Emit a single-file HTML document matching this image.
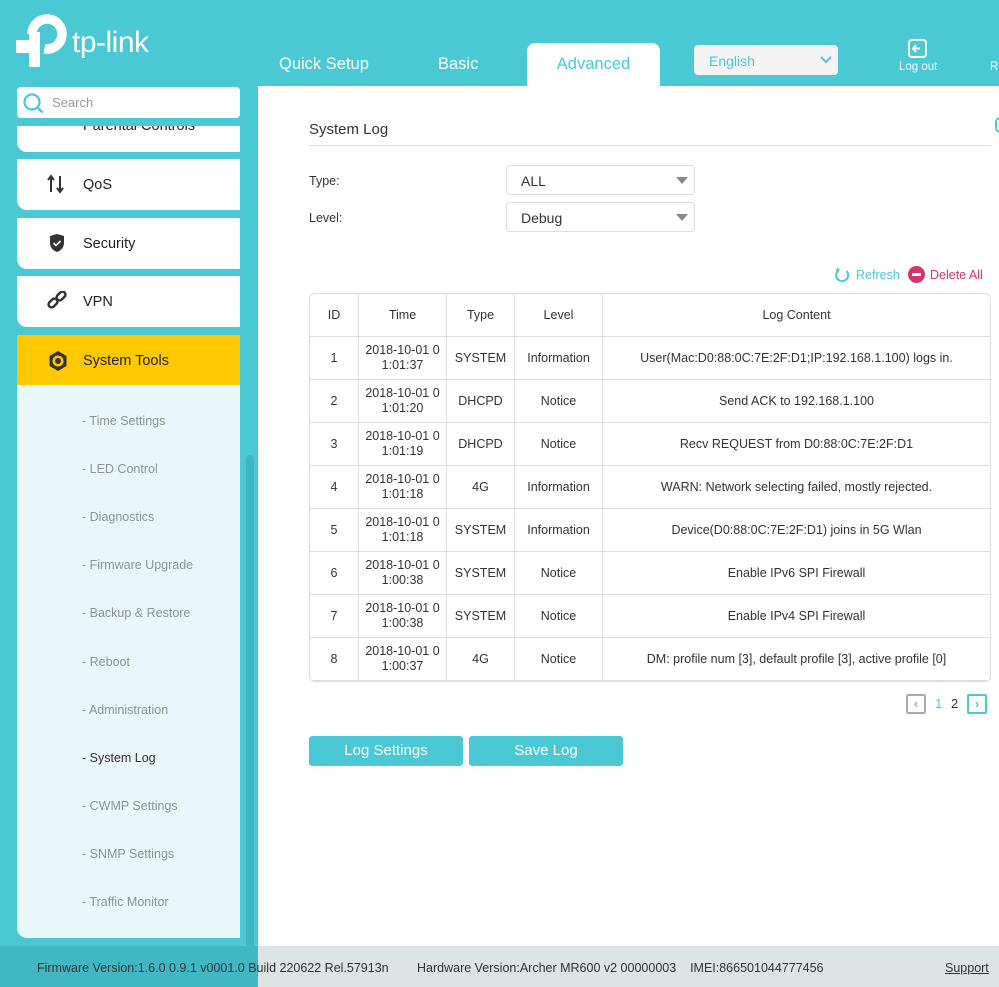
<!DOCTYPE html>
<html><head><meta charset="utf-8"><style>
*{margin:0;padding:0;box-sizing:border-box}
body{width:999px;height:987px;background:#4ac9d5;font-family:"Liberation Sans",sans-serif;position:relative;overflow:hidden;color:#333}
.abs{position:absolute}
.tab{position:absolute;top:55px;color:#fff;font-size:16.5px}
.card{position:absolute;left:17px;width:223px;background:#fff;border-radius:0 0 0 10px;font-size:14.5px;color:#222}
.card span{position:absolute;left:66px;top:18px}
.card svg{position:absolute;left:30px;top:15px}
.sub{position:absolute;left:82px;font-size:12.5px;color:#8a9499}
table{border-collapse:collapse;font-size:12.5px;color:#333}
td,th{border:1px solid #ddd;text-align:center;font-weight:normal;height:43px;line-height:15px}
.sel{position:absolute;left:506px;width:189px;height:30px;border:1px solid #ddd;border-radius:4px;font-size:14px;padding:7px 14px;color:#333}
.sel:after{content:"";position:absolute;right:6px;top:11px;border:6px solid transparent;border-top:7px solid #888}
.btn{position:absolute;top:736px;width:154px;height:30px;background:#4ac9d5;color:#fff;font-size:15px;text-align:center;line-height:30px;border-radius:3px}
</style></head><body>
<!-- logo -->
<svg class="abs" style="left:0;top:0" width="80" height="80" viewBox="0 0 80 80">
<path d="M32 34 A15 15 0 1 1 44.4 48.8" fill="none" stroke="#fff" stroke-width="9.5"/>
<rect x="29" y="32" width="11" height="35" fill="#fff"/>
<rect x="16" y="40" width="24" height="13" fill="#fff"/>
</svg>
<div class="abs" style="left:72px;top:26px;color:#fff;font-size:30px;letter-spacing:-0.5px">tp-link</div>
<div class="tab" style="left:279px">Quick Setup</div>
<div class="tab" style="left:438px">Basic</div>
<div class="abs" style="left:527px;top:43px;width:133px;height:44px;background:#fff;border-radius:8px 8px 0 0;color:#4ac9d5;font-size:16.5px;text-align:center;padding-top:12px">Advanced</div>
<div class="abs" style="left:694px;top:45px;width:144px;height:30px;background:#f4f4f4;border-radius:4px;color:#4ac9d5;font-size:14px;padding:8px 15px">English<svg class="abs" style="right:6px;top:11px" width="12" height="8"><path d="M1 1l5 5 5-5" stroke="#4ac9d5" stroke-width="2" fill="none"/></svg></div>
<svg class="abs" style="left:907px;top:38px" width="22" height="22"><rect x="2" y="2" width="17" height="17" rx="3" fill="none" stroke="#fff" stroke-width="2"/><path d="M13 10.5H6M9 7l-3 3.5 3 3.5" stroke="#fff" stroke-width="2" fill="none"/></svg>
<div class="abs" style="left:899px;top:61px;color:#fff;font-size:11.5px">Log out</div>
<div class="abs" style="left:990px;top:61px;color:#fff;font-size:11.5px">R</div>
<!-- content panel -->
<div class="abs" style="left:258px;top:86px;width:741px;height:860px;background:#fff"></div>
<!-- sidebar -->
<div class="abs" style="left:17px;top:87px;width:223px;height:31px;background:#fff;border-radius:4px"></div>
<svg class="abs" style="left:22px;top:92px" width="24" height="22"><circle cx="10" cy="10" r="7.5" fill="none" stroke="#4ac9d5" stroke-width="2.2"/><path d="M15.5 15.5l5 5" stroke="#4ac9d5" stroke-width="2.5"/></svg>
<div class="abs" style="left:52px;top:95px;font-size:13px;color:#999">Search</div>
<div class="card" style="top:126px;height:26px;overflow:hidden"><span style="top:-8px">Parental Controls</span></div>
<div class="card" style="top:159px;height:51px"><svg width="22" height="20"><path d="M4 18V3M1 6l3-4 3 4M13 2v15M10 14l3 4 3-4" stroke="#333" stroke-width="2" fill="none"/></svg><span>QoS</span></div>
<div class="card" style="top:218px;height:51px"><svg width="22" height="20"><path d="M3 3l7-2 7 2v7c0 5-4 8-7 9-3-1-7-4-7-9z" fill="#333"/><path d="M6.5 10l2.5 2.5 4.5-4.5" stroke="#fff" stroke-width="1.6" fill="none"/></svg><span>Security</span></div>
<div class="card" style="top:276px;height:51px"><svg width="22" height="20"><rect x="1" y="9" width="10" height="6" rx="3" transform="rotate(-45 6 12)" fill="none" stroke="#333" stroke-width="2.5"/><rect x="9" y="2" width="10" height="6" rx="3" transform="rotate(-45 14 5)" fill="none" stroke="#333" stroke-width="2.5"/></svg><span>VPN</span></div>
<div class="card" style="top:335px;height:50px;background:#ffc800;border-radius:0"><svg width="22" height="22"><polygon points="11,1 19.5,6 19.5,16 11,21 2.5,16 2.5,6" fill="#333"/><circle cx="11" cy="11" r="5.5" fill="#ffc800"/><circle cx="11" cy="11" r="3" fill="#333"/></svg><span>System Tools</span></div>
<div class="abs" style="left:17px;top:385px;width:223px;height:553px;background:#eaf7f9;border-radius:0 0 0 10px"></div>
<div class="sub" style="top:414px">- Time Settings</div>
<div class="sub" style="top:462px">- LED Control</div>
<div class="sub" style="top:510px">- Diagnostics</div>
<div class="sub" style="top:558px">- Firmware Upgrade</div>
<div class="sub" style="top:606px">- Backup &amp; Restore</div>
<div class="sub" style="top:655px">- Reboot</div>
<div class="sub" style="top:703px">- Administration</div>
<div class="sub" style="top:751px;color:#333">- System Log</div>
<div class="sub" style="top:799px">- CWMP Settings</div>
<div class="sub" style="top:847px">- SNMP Settings</div>
<div class="sub" style="top:895px">- Traffic Monitor</div>
<div class="abs" style="left:246px;top:455px;width:8px;height:532px;background:#3fb5c1;border-radius:4px"></div>
<!-- main -->
<div class="abs" style="left:309px;top:121px;font-size:15px;color:#333">System Log</div>
<div class="abs" style="left:309px;top:145px;width:682px;height:1px;background:#ddd"></div>
<div class="abs" style="left:995px;top:117px;width:10px;height:16px;border:2px solid #4ac9d5;border-radius:8px"></div>
<div class="abs" style="left:309px;top:174px;font-size:12.5px">Type:</div>
<div class="abs" style="left:309px;top:211px;font-size:12.5px">Level:</div>
<div class="sel" style="top:165px">ALL</div>
<div class="sel" style="top:202px">Debug</div>
<svg class="abs" style="left:834px;top:266px" width="16" height="17"><path d="M12.5 5A6 6 0 1 1 5 4" fill="none" stroke="#4ac9d5" stroke-width="2"/><path d="M3 1l3 3-4 2z" fill="#4ac9d5"/></svg>
<div class="abs" style="left:856px;top:268px;font-size:12.5px;color:#4ac9d5">Refresh</div>
<div class="abs" style="left:908px;top:266px;width:17px;height:17px;border-radius:50%;background:#d6336c"></div>
<div class="abs" style="left:912px;top:273px;width:9px;height:3px;background:#fff"></div>
<div class="abs" style="left:930px;top:268px;font-size:12.5px;color:#d6336c">Delete All</div>
<div class="abs" style="left:309px;top:293px;width:682px;height:389px;border:1px solid #ddd;border-radius:6px;overflow:hidden">
<table style="width:682px;margin:-1px">
<tr><th style="width:49px">ID</th><th style="width:88px">Time</th><th style="width:68px">Type</th><th style="width:88px">Level</th><th>Log Content</th></tr>
<tr><td>1</td><td>2018-10-01 0<br>1:01:37</td><td>SYSTEM</td><td>Information</td><td>User(Mac:D0:88:0C:7E:2F:D1;IP:192.168.1.100) logs in.</td></tr>
<tr><td>2</td><td>2018-10-01 0<br>1:01:20</td><td>DHCPD</td><td>Notice</td><td>Send ACK to 192.168.1.100</td></tr>
<tr><td>3</td><td>2018-10-01 0<br>1:01:19</td><td>DHCPD</td><td>Notice</td><td>Recv REQUEST from D0:88:0C:7E:2F:D1</td></tr>
<tr><td>4</td><td>2018-10-01 0<br>1:01:18</td><td>4G</td><td>Information</td><td>WARN: Network selecting failed, mostly rejected.</td></tr>
<tr><td>5</td><td>2018-10-01 0<br>1:01:18</td><td>SYSTEM</td><td>Information</td><td>Device(D0:88:0C:7E:2F:D1) joins in 5G Wlan</td></tr>
<tr><td>6</td><td>2018-10-01 0<br>1:00:38</td><td>SYSTEM</td><td>Notice</td><td>Enable IPv6 SPI Firewall</td></tr>
<tr><td>7</td><td>2018-10-01 0<br>1:00:38</td><td>SYSTEM</td><td>Notice</td><td>Enable IPv4 SPI Firewall</td></tr>
<tr><td>8</td><td>2018-10-01 0<br>1:00:37</td><td>4G</td><td>Notice</td><td>DM: profile num [3], default profile [3], active profile [0]</td></tr>
</table></div>
<div class="abs" style="left:906px;top:694px;width:20px;height:20px;border:2px solid #aaa;border-radius:2px;color:#aaa;font-size:13px;text-align:center;line-height:16px;font-weight:bold">‹</div>
<div class="abs" style="left:935px;top:696px;font-size:13px;color:#4ac9d5">1</div>
<div class="abs" style="left:951px;top:696px;font-size:13px;color:#333">2</div>
<div class="abs" style="left:967px;top:694px;width:20px;height:20px;border:2px solid #4ac9d5;border-radius:2px;color:#4ac9d5;font-size:13px;text-align:center;line-height:16px;font-weight:bold">›</div>
<div class="btn" style="left:309px">Log Settings</div>
<div class="btn" style="left:469px">Save Log</div>
<!-- footer -->
<div class="abs" style="left:0;top:946px;width:999px;height:41px;background:#dce4e6"></div>
<div class="abs" style="left:0;top:946px;width:258px;height:41px;background:#3fb8c4"></div>
<div class="abs" style="left:37px;top:961px;font-size:12.5px;color:#333">Firmware Version:1.6.0 0.9.1 v0001.0 Build 220622 Rel.57913n</div>
<div class="abs" style="left:417px;top:961px;font-size:12.5px;color:#333">Hardware Version:Archer MR600 v2 00000003&nbsp;&nbsp;&nbsp;&nbsp;IMEI:866501044777456</div>
<div class="abs" style="left:945px;top:961px;font-size:12.5px;color:#333;text-decoration:underline">Support</div>
</body></html>
